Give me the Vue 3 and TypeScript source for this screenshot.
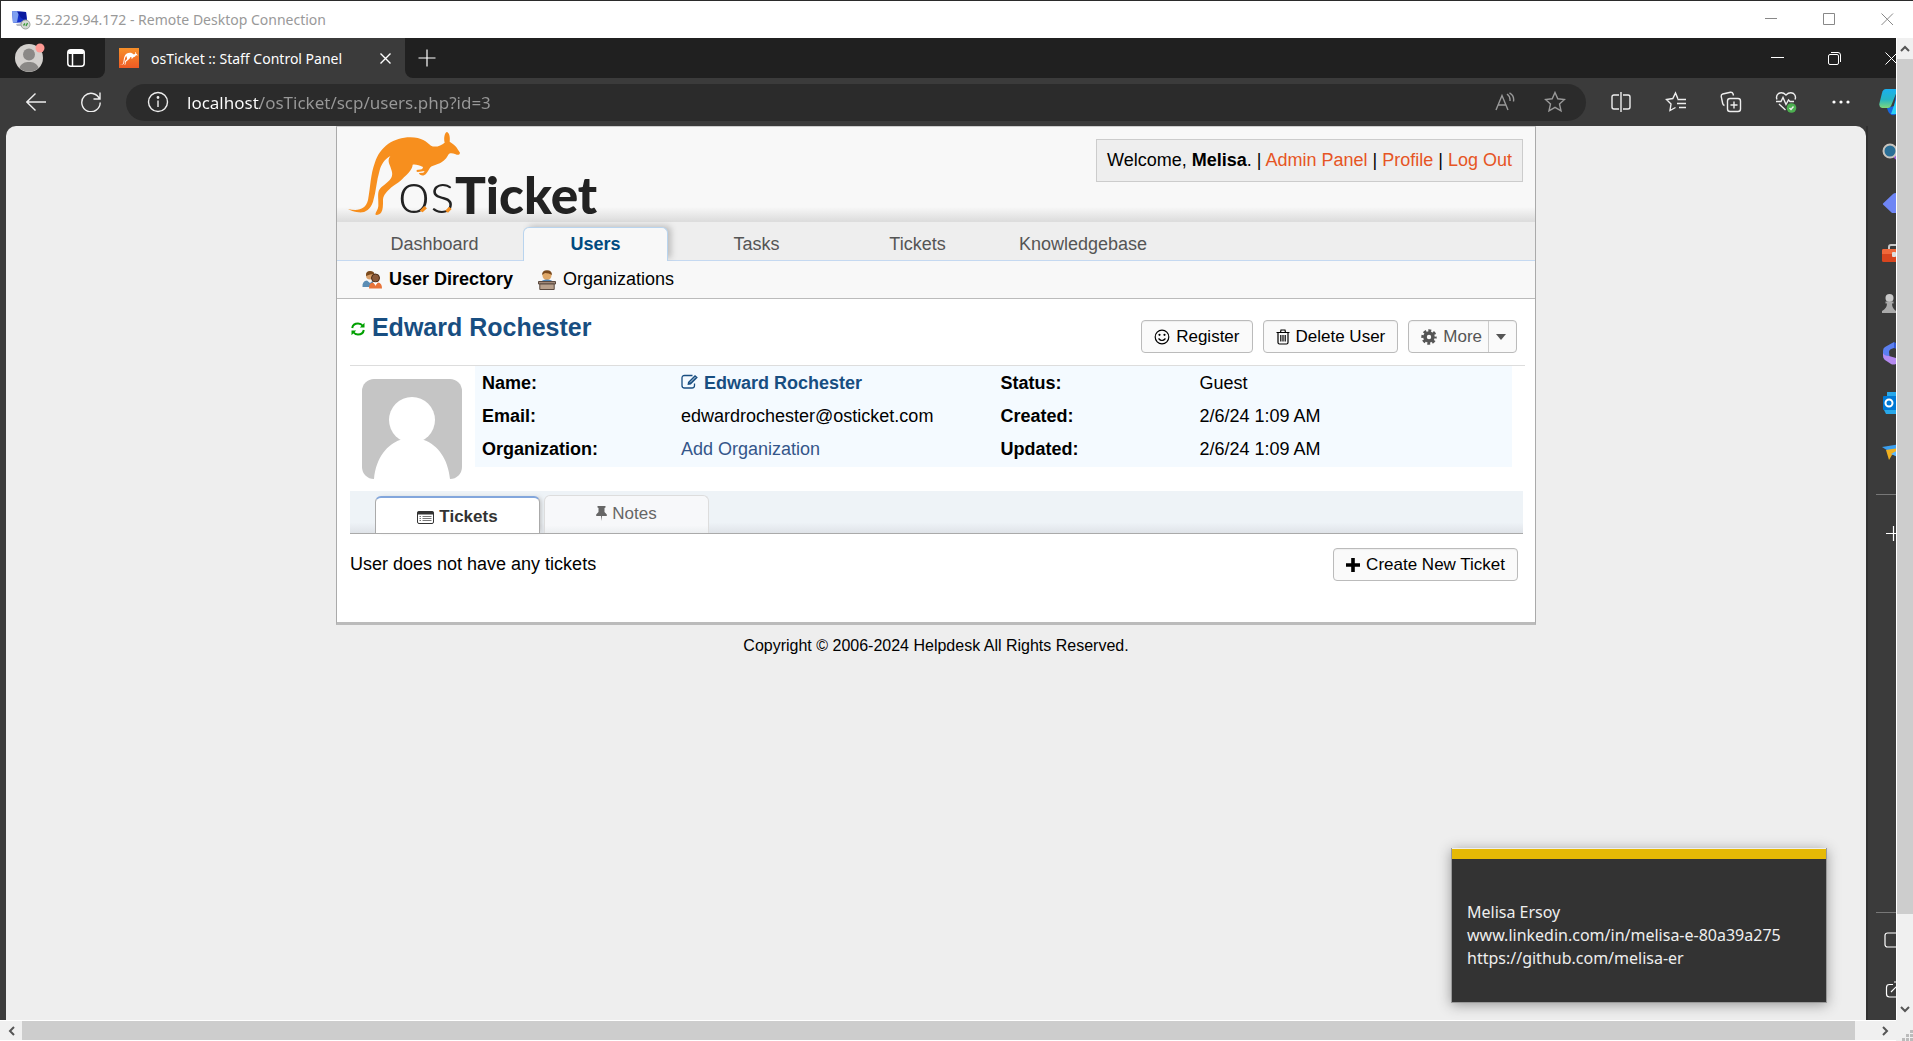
<script setup lang="ts">
import { ref } from 'vue'

interface Row {
  label: string
  value: string
  kind?: 'name' | 'link'
}

const navItems: string[] = ['Dashboard', 'Users', 'Tasks', 'Tickets', 'Knowledgebase']
const leftRows: Row[] = [
  { label: 'Name:', value: 'Edward Rochester', kind: 'name' },
  { label: 'Email:', value: 'edwardrochester@osticket.com' },
  { label: 'Organization:', value: 'Add Organization', kind: 'link' },
]
const rightRows: Row[] = [
  { label: 'Status:', value: 'Guest' },
  { label: 'Created:', value: '2/6/24 1:09 AM' },
  { label: 'Updated:', value: '2/6/24 1:09 AM' },
]
const address = ref<string>('localhost/osTicket/scp/users.php?id=3')
const activeNav = ref<string>('Users')
</script>

<template>
  <div class="desktop">
    <svg class="defs" aria-hidden="true">
      <symbol id="roo" viewBox="50 30 345 260">
        <path d="M53 267C85 274 106 268 113 240C121 200 120 165 134 127C150 80 190 52 240 52C275 52 288 66 302 77C315 84 332 77 343 68C339 52 344 37 350 36C357 38 360 52 358 65C366 71 378 78 382 88L389 98C388 105 382 106 376 103C366 99 358 98 354 104C346 120 335 127 322 132C312 137 303 138 299 143C294 152 288 163 281 166C275 169 265 163 266 159L279 158L283 153L262 156C256 154 258 149 264 149C273 149 277 148 278 141C268 137 256 132 247 134C245 150 235 158 221 172C206 190 190 195 178 207C164 220 158 228 158 243C158 256 158 268 153 277C148 285 136 287 135 283C137 274 143 269 144 258C145 240 141 222 146 211C153 197 171 192 182 175C190 161 183 150 179 137C174 125 173 118 180 108C163 117 153 133 148 151C138 183 138 214 128 245C119 270 104 279 84 277C70 275 60 271 53 267Z" />
      </symbol>
    </svg>

    <header class="rdp">
      <svg class="rdp-icon" viewBox="0 0 20 20" width="20" height="20" aria-hidden="true">
        <path d="M1 1L15 2L16 12L2 13Z" fill="#1330c8" />
        <path d="M1 1L8 1.500L6 12.500L2 13Z" fill="#7fa0f0" />
        <path d="M6 1.500L15 2L16 11L10 8Z" fill="#0a1aa0" />
        <path d="M5 14L12 13L12 16L6 16Z" fill="#b9bcc4" />
        <circle cx="14.500" cy="14.500" r="4.500" fill="#d4d8d4" stroke="#9aa09a" />
        <path d="M12.500 15.500L14 13.500M15 16L16.500 13" stroke="#3b9a3b" stroke-width="1.300" />
      </svg>
      <span class="rdp-name">52.229.94.172 - Remote Desktop Connection</span>
      <div class="rdp-controls">
        <button aria-label="Minimize window"><svg width="13" height="13" viewBox="0 0 13 13"><path d="M0 5.500H12" /></svg></button>
        <button aria-label="Maximize window"><svg width="13" height="13" viewBox="0 0 13 13"><path d="M.5.5H11.500V11.500H.5Z" /></svg></button>
        <button aria-label="Close window"><svg width="13" height="13" viewBox="0 0 13 13"><path d="M.5.5L12 12M12 .5L.5 12" /></svg></button>
      </div>
    </header>

    <div class="session">
      <div class="browser">
        <div class="tabstrip">
          <div class="strip-left">
            <button class="profile" aria-label="Account">
              <svg width="30" height="30" viewBox="0 0 30 30">
                <circle cx="14" cy="15" r="14" fill="#d3d0cd" />
                <circle cx="14" cy="11.500" r="6" fill="#8a8886" />
                <path d="M4.500 25C6 20 10 19 14 19S22 20 23.500 25A14 14 0 0 1 4.500 25Z" fill="#8a8886" />
                <circle cx="25" cy="5" r="4.500" fill="#ff9a94" />
              </svg>
            </button>
            <button class="workspaces" aria-label="Tab actions">
              <svg width="18" height="18" viewBox="0 0 18 18" fill="none" stroke="#fff" stroke-width="1.500"><rect x=".8" y=".8" width="16.400" height="16.400" rx="3" /><path d="M1 3.500H17M5.500 5V17" /><path d="M1.500 3H16.500" stroke-width="4" /></svg>
            </button>
          </div>
          <div class="tab">
            <span class="favicon"><svg width="18" height="15"><use href="#roo" fill="#fff" /></svg></span>
            <span class="tab-title">osTicket :: Staff Control Panel</span>
            <button aria-label="Close tab"><svg width="11" height="11" viewBox="0 0 11 11" stroke="#fff" stroke-width="1.400"><path d="M.5.5L10.500 10.500M10.500.5L.5 10.500" /></svg></button>
          </div>
          <button class="new-tab" aria-label="New tab"><svg width="18" height="18" viewBox="0 0 18 18" stroke="#fff" stroke-width="1.200"><path d="M9 .5V17.500M.5 9H17.500" /></svg></button>
          <div class="win-controls">
            <button aria-label="Minimize"><svg width="13" height="13" viewBox="0 0 13 13"><path d="M0 5.500H13" /></svg></button>
            <button aria-label="Restore"><svg width="13" height="13" viewBox="0 0 13 13"><rect x=".5" y="2.500" width="10" height="10" rx="1.500" /><path d="M3 .5H10Q12.500.5 12.500 3V10" /></svg></button>
            <button class="clipped" aria-label="Close"><svg width="13" height="13" viewBox="0 0 13 13"><path d="M.5.5L12.500 12.500M12.500.5L.5 12.500" /></svg></button>
          </div>
        </div>

        <div class="toolbar">
          <div class="history">
            <button aria-label="Back"><svg width="20" height="20" viewBox="0 0 20 20"><path d="M20 10H.8M9.500 1.500L.8 10L9.500 18.500" /></svg></button>
            <button aria-label="Refresh"><svg width="20" height="20" viewBox="0 0 20 20"><path d="M18.500 7A9.200 9.200 0 1 0 19.200 10.500M19 .5V7H12.500" /></svg></button>
          </div>
          <div class="omnibox">
            <button class="site-info" aria-label="Site information"><svg width="22" height="22" viewBox="0 0 22 22"><circle cx="11" cy="11" r="9.500" /><path d="M11 9.500V16" /><circle cx="11" cy="6.500" r=".7" /></svg></button>
            <input v-model="address" class="address" type="text" aria-label="Address" />
            <button class="dim" aria-label="Read aloud"><svg width="20" height="20" viewBox="0 0 20 20"><path d="M1 18L7 3.500L13 18M3 13H11M12 2Q15.500 4.500 15 9M14.500 .8Q19.500 3.500 18.500 9.500" /></svg></button>
            <button class="dim" aria-label="Add to favorites"><svg width="22" height="22" viewBox="0 0 22 22"><path d="M11 1.500L13.800 7.800L20.500 8.500L15.500 13L17 19.800L11 16.300L5 19.800L6.500 13L1.500 8.500L8.200 7.800Z" /></svg></button>
          </div>
          <div class="tools">
            <button aria-label="Split screen"><svg width="20" height="20" viewBox="0 0 20 20"><path d="M8 3H3Q1 3 1 5V15Q1 17 3 17H8M12 3H17Q19 3 19 5V15Q19 17 17 17H12M10 0V20" /></svg></button>
            <button aria-label="Favorites"><svg width="22" height="22" viewBox="0 0 22 22"><path d="M13 7.500H12.800L10.500 2L7.800 7.500L1.500 8.500L6 13L5 19.500L10.500 16.500M12.500 8.500H21M12 12.500H21M14 16.500H21" /></svg></button>
            <button aria-label="Collections"><svg width="22" height="22" viewBox="0 0 22 22"><rect x="7.500" y="7.500" width="13" height="13" rx="2.500" /><path d="M14 10.500V17.500M10.500 14H17.500M4.500 14.500Q3 14 2.700 12.500L1.200 5.500Q1 3.500 2.700 3L10.500 1.200Q12.500 1 13 2.800L13.500 4.500" /></svg></button>
            <button aria-label="Browser essentials"><svg width="22" height="22" viewBox="0 0 22 22"><path d="M2 8.500Q.5 5 3.500 2.500Q7.500.5 11 4Q14.500.5 18.500 2.500Q21.500 5 20 8.500M1 10.500H6L8 6.500L11 13.500L13.500 9L15 10.500H19M4 13L10.500 19" /><circle cx="16.500" cy="17" r="4.800" fill="#4caf50" stroke="none" /><path d="M14.500 17L16 18.500L18.500 15.500" /></svg></button>
            <button aria-label="Settings and more"><svg width="18" height="4" viewBox="0 0 18 4"><g fill="#fff" stroke="none"><circle cx="2" cy="2" r="1.600" /><circle cx="9" cy="2" r="1.600" /><circle cx="16" cy="2" r="1.600" /></g></svg></button>
            <button class="copilot" aria-label="Copilot">
              <svg width="30" height="28" viewBox="0 0 30 28">
                <defs><linearGradient id="cop" x1="0" y1="0" x2="0" y2="1"><stop offset="0" stop-color="#1ab0f0" /><stop offset=".55" stop-color="#25b5c5" /><stop offset="1" stop-color="#7fd879" /></linearGradient></defs>
                <path d="M8 20L15 18L18 1H25V20L16 27Q11 28 9 23Z" fill="#1668e0" stroke="none" />
                <path d="M7 1H19L12 18Q11 20 9 20H3Q-.5 19 .5 15L3 5Q4 1 7 1Z" fill="url(#cop)" stroke="none" />
                <path d="M18 9L12 26H22V9Z" fill="#2ad0f5" stroke="none" />
              </svg>
            </button>
          </div>
        </div>

        <div class="viewport">
          <main class="page">
            <div class="container">
              <div class="banner">
                <a href="#" class="logo" aria-label="osTicket">
                  <svg width="260" height="87" viewBox="50 30 780 261">
                    <use href="#roo" x="50" y="30" width="345" height="260" fill="#f78f1e" />
                    <text x="202" y="280" class="logo-os">os</text>
                    <text x="374" y="281" class="logo-ticket">Ticket</text>
                    <path d="M268 272L282 258L290 265L277 277ZM345 272L356 260L364 267L353 278Z" fill="#f78f1e" />
                  </svg>
                </a>
                <p class="welcome">
                  Welcome, <strong>Melisa</strong>. | <a href="#">Admin Panel</a> | <a href="#">Profile</a> | <a href="#">Log Out</a>
                </p>
              </div>

              <nav class="mainnav" aria-label="Main">
                <a v-for="item in navItems" :key="item" href="#" :class="{ active: item === activeNav }" @click.prevent="activeNav = item">{{ item }}</a>
              </nav>

              <nav class="subnav" aria-label="Users">
                <a href="#" class="current">
                  <svg width="20" height="20" viewBox="0 0 20 20">
                    <circle cx="8" cy="5.500" r="4" fill="#d9a06b" /><path d="M4 5Q4 1 8 1T12.500 4Q8 4 4 6Z" fill="#7a4a1e" />
                    <path d="M.5 17Q0 11 5 10.500L8 13L11 10.500V17Z" fill="#5b8db5" />
                    <circle cx="13.500" cy="8" r="4" fill="#8a5a3a" stroke="#4a2d18" />
                    <path d="M7 18.500Q7 12.500 11 12.500L13.500 15L16 12.500Q20 13 20 18.500Z" fill="#e8743a" /><path d="M12 12.500H15L13.500 16Z" fill="#fff" />
                  </svg>
                  User Directory
                </a>
                <a href="#">
                  <svg width="18" height="20" viewBox="0 0 18 20">
                    <circle cx="9" cy="5.500" r="4.500" fill="#e0a868" /><path d="M4 5Q4 .3 9 .3T14 5Q11 3 7 3Z" fill="#7a4a1e" />
                    <path d="M3 12Q4 9.500 9 9.500T15 12Z" fill="#4f86b8" />
                    <path d="M.5 11.500H17.500V14H.5Z" fill="#a08878" stroke="#5b4a40" /><path d="M1.800 14H16.200V19.500H1.800Z" fill="#b8a08c" stroke="#5b4a40" />
                  </svg>
                  Organizations
                </a>
              </nav>

              <section class="content">
                <div class="heading">
                  <h2>
                    <a href="#">
                      <svg width="14" height="14" viewBox="0 0 14 14" fill="none" stroke="#00a000" stroke-width="2"><path d="M1.200 6Q2 1.500 7 1.500Q10 1.500 12 4M12.800 8Q12 12.500 7 12.500Q4 12.500 2 10" /><path d="M13.500 .8V5.500H8.800ZM.5 13.200V8.500H5.200Z" fill="#00a000" stroke="none" /></svg>
                      Edward Rochester
                    </a>
                  </h2>
                  <div class="actions">
                    <button class="btn">
                      <svg width="16" height="16" viewBox="0 0 16 16" fill="none" stroke="#000" stroke-width="1.200"><circle cx="8" cy="8" r="6.800" /><path d="M4.500 9.500Q8 13.500 11.500 9.500" /><g fill="#000" stroke="none"><circle cx="5.500" cy="5.800" r="1.100" /><circle cx="10.500" cy="5.800" r="1.100" /></g></svg>
                      Register
                    </button>
                    <button class="btn">
                      <svg width="14" height="16" viewBox="0 0 14 16" fill="none" stroke="#000" stroke-width="1.200"><path d="M.5 3.500H13.500M4.500 3.500L5 1H9L9.500 3.500M2 4V13.500Q2 15 3.500 15H10.500Q12 15 12 13.500V4M4.800 6V12.500M7 6V12.500M9.200 6V12.500" /></svg>
                      Delete User
                    </button>
                    <div class="split">
                      <button>
                        <svg width="16" height="16" viewBox="0 0 16 16"><g fill="none" stroke="#555"><circle cx="8" cy="8" r="4" stroke-width="3.600" /><circle cx="8" cy="8" r="6.400" stroke-width="2.600" stroke-dasharray="2.900 2.127" stroke-dashoffset="1.450" /></g></svg>
                        More
                      </button>
                      <button class="caret" aria-label="More actions"><svg width="10" height="6" viewBox="0 0 10 6"><path d="M0 0H10L5 6Z" fill="#555" /></svg></button>
                    </div>
                  </div>
                </div>

                <div class="profile-row">
                  <svg class="avatar" width="100" height="100" viewBox="0 0 100 100" role="img" aria-label="Avatar"><rect width="100" height="100" fill="#c5c5c5" /><circle cx="50" cy="41" r="23" fill="#fff" /><path d="M12 100C14 78 26 65 38 61Q50 55 62 61C76 66 86 80 88 100Z" fill="#fff" /></svg>
                  <div class="facts">
                    <table v-for="(rows, i) in [leftRows, rightRows]" :key="i">
                      <tbody>
                        <tr v-for="row in rows" :key="row.label">
                          <th scope="row">{{ row.label }}</th>
                          <td>
                            <a v-if="row.kind === 'name'" href="#" class="name">
                              <svg width="18" height="15" viewBox="0 0 18 15" fill="none" stroke="#184e81" stroke-width="1.300"><path d="M11.500 1.500H3.500Q1 1.500 1 4V11.500Q1 14 3.500 14H11Q13.500 14 13.500 11.500V9.500" /><path d="M7 8L14 1L16.800 3.500L9.800 10.500L6.500 11Z" fill="#184e81" stroke="none" /><path d="M9 8.500L14.500 3" stroke="#f5faff" stroke-width=".8" /></svg>
                              {{ row.value }}
                            </a>
                            <a v-else-if="row.kind === 'link'" href="#">{{ row.value }}</a>
                            <template v-else>{{ row.value }}</template>
                          </td>
                        </tr>
                      </tbody>
                    </table>
                  </div>
                </div>

                <div class="tabs" role="tablist">
                  <button role="tab" aria-selected="true" class="on">
                    <svg width="17" height="13" viewBox="0 0 17 13"><rect x=".5" y=".5" width="16" height="12" rx="1.500" fill="#fff" stroke="#333" /><path d="M.5.5H16.500V3.500H.5Z" fill="#333" /><path d="M2.500 5.500H4M5.500 5.500H14.500M2.500 7.500H4M5.500 7.500H14.500M2.500 9.500H4M5.500 9.500H14.500" stroke="#777" /></svg>
                    Tickets
                  </button>
                  <button role="tab" aria-selected="false">
                    <svg width="11" height="15" viewBox="0 0 11 15" fill="#666"><path d="M1.500 0H9.500V1.500L8.500 2V6L10.800 8.500V10H6L5.500 15L5 10H.2V8.500L2.500 6V2L1.500 1.500Z" /></svg>
                    Notes
                  </button>
                </div>

                <div class="tickets">
                  <span>User does not have any tickets</span>
                  <button class="btn">
                    <svg width="14" height="14" viewBox="0 0 14 14"><path d="M5.200 0H8.800V5.200H14V8.800H8.800V14H5.200V8.800H0V5.200H5.200Z" /></svg>
                    Create New Ticket
                  </button>
                </div>
              </section>
            </div>
            <footer class="copyright">Copyright © 2006-2024 Helpdesk All Rights Reserved.</footer>
          </main>

          <aside class="sidebar">
            <button aria-label="Search"><svg width="22" height="22" viewBox="0 0 22 22"><path d="M12 13L20 21" stroke="#9b59d0" stroke-width="4" /><circle cx="8" cy="9" r="6.500" fill="#2a6f97" stroke="#c8c4be" stroke-width="2" /></svg></button>
            <button aria-label="Shopping"><svg width="22" height="22" viewBox="0 0 22 22"><path d="M1 11.500L11 2Q12 1 14 1H22V21H10L1.500 13Q.5 12 1 11.500Z" fill="#6f86f5" /></svg></button>
            <button aria-label="Tools"><svg width="26" height="18" viewBox="0 0 26 18"><path d="M7 5V3Q7 1 9 1H17" fill="none" stroke="#c8c8c8" stroke-width="2" /><rect y="5" width="26" height="13" rx="1.500" fill="#d8451e" /><path d="M0 6.500Q0 5 1.500 5H26V10H0Z" fill="#f0683a" /><rect x="10" y="8" width="4" height="5" rx="1" fill="#ddd" /></svg></button>
            <button aria-label="Games"><svg width="22" height="22" viewBox="0 0 22 22"><path d="M14 1H22V16H14Z" fill="#7d3fa8" /><circle cx="7.500" cy="6" r="4" fill="#c8c8c8" /><path d="M3.500 9.500H11.500V11.500H10Q10 16 14 19V21H0V19Q5 16 5 11.500H3.500Z" fill="#aaa" /></svg></button>
            <button aria-label="Microsoft 365"><svg width="24" height="24" viewBox="0 0 24 24"><path d="M12 1L3 6Q1 7 1 10V14Q1 17 3 19L8 20L7 11Q7 8 12 7Z" fill="#5b7ff0" /><path d="M1 12Q2 15 7 15L14 17V23Q11 24 9 23L3 19Q1 17 1 14Z" fill="#b58af0" /><path d="M12 1L20 5V10L12 7Z" fill="#3559d0" /></svg></button>
            <button aria-label="Outlook"><svg width="24" height="22" viewBox="0 0 24 22"><path d="M5 0H24V22H4L2 18H5Z" fill="#28a8ea" /><rect x="1" y="4" width="16" height="14" rx="1" fill="#0078d4" /><circle cx="7" cy="11" r="3.500" fill="none" stroke="#fff" stroke-width="2" /></svg></button>
            <button aria-label="Drop"><svg width="24" height="20" viewBox="0 0 24 20"><path d="M0 4L24 0V18L8 9Z" fill="#3a9ff0" /><path d="M4 7L7 17L10 12L24 4L10 6Z" fill="#f0b020" /><path d="M9 11L24 3V18Z" fill="#5bb8ff" /></svg></button>
            <hr class="after-apps" />
            <button class="line plus" aria-label="Customize"><svg width="15" height="15" viewBox="0 0 15 15"><path d="M7.500 0V15M0 7.500H15" /></svg></button>
            <hr class="before-end" />
            <button class="line" aria-label="Screenshot"><svg width="20" height="16" viewBox="0 0 20 16"><rect x="3" y="1" width="17" height="14" rx="2.500" /></svg></button>
            <button class="line last" aria-label="Open in new window"><svg width="22" height="18" viewBox="0 0 22 18"><path d="M11 3.500H7.500Q4.500 3.500 4.500 6.500V13Q4.500 16 7.500 16H20M9 11L19 1M12 1H20" /></svg></button>
          </aside>
        </div>
      </div>

      <div class="vscroll">
        <button aria-label="Scroll up"><svg width="10" height="7" viewBox="0 0 10 7"><path d="M1 6L5 2L9 6" /></svg></button>
        <div class="vtrack"><div class="vthumb"></div></div>
        <button aria-label="Scroll down"><svg width="10" height="7" viewBox="0 0 10 7"><path d="M1 1L5 5L9 1" /></svg></button>
      </div>
      <div class="hscroll">
        <button aria-label="Scroll left"><svg width="7" height="10" viewBox="0 0 7 10"><path d="M6 1L2 5L6 9" /></svg></button>
        <div class="htrack"><div class="hthumb"></div></div>
        <button aria-label="Scroll right"><svg width="7" height="10" viewBox="0 0 7 10"><path d="M1 1L5 5L1 9" /></svg></button>
      </div>
      <div class="grip"><svg width="11" height="11" viewBox="0 0 11 11" fill="#bbb"><path d="M8 0H11V3H8ZM4 4H7V7H4ZM8 4H11V7H8ZM0 8H3V11H0ZM4 8H7V11H4ZM8 8H11V11H8Z" /></svg></div>
    </div>

    <div class="note" role="status">
      <span>Melisa Ersoy</span>
      <span>www.linkedin.com/in/melisa-e-80a39a275</span>
      <span>https://github.com/melisa-er</span>
    </div>
  </div>
</template>

<style>
body {
  margin: 0;
  background: #eee;
}
</style>

<style scoped>
* {
  box-sizing: border-box;
}
.desktop {
  position: relative;
  display: flex;
  flex-direction: column;
  min-height: 100vh;
  border-top: 1px solid #2b2b2b;
  font-family: "Liberation Sans", Arial, sans-serif;
  font-size: 18px;
  color: #000;
}
.defs {
  position: absolute;
  width: 0;
  height: 0;
}
button {
  display: flex;
  align-items: center;
  justify-content: center;
  margin: 0;
  padding: 0;
  border: 0;
  background: none;
  font: inherit;
  color: inherit;
}
svg {
  flex: none;
}
a {
  text-decoration: none;
  color: inherit;
}

/* remote session title bar */
.rdp {
  display: flex;
  align-items: center;
  height: 37px;
  padding-left: 10px;
  background: #fff;
  border-left: 1px solid #2b2b2b;
  color: #999;
  font: 14px "Noto Sans", sans-serif;
}
.rdp-name {
  margin-left: 4px;
}
.rdp-controls {
  display: flex;
  gap: 6px;
  margin-left: auto;
}
.rdp-controls button {
  width: 52px;
  height: 36px;
}
.rdp-controls svg {
  fill: none;
  stroke: #888;
}

.session {
  flex: 1;
  display: grid;
  grid-template-columns: minmax(0, 1fr) 17px;
  grid-template-rows: 1fr 21px;
}
.browser {
  display: flex;
  flex-direction: column;
  min-width: 0;
  background: #3b3b3b;
  overflow: hidden;
}

/* tab strip */
.tabstrip {
  display: flex;
  height: 40px;
  background: #3b3b3b;
}
.strip-left {
  display: flex;
  align-items: center;
  width: 105px;
  padding-left: 15px;
  background: #202020;
  border-bottom-right-radius: 8px;
}
.workspaces {
  margin-left: 22px;
}
.tab {
  display: flex;
  align-items: center;
  width: 300px;
  padding: 0 14px;
  color: #fff;
  font: 14px "Noto Sans", sans-serif;
  background: #3b3b3b;
  border-radius: 8px 8px 0 0;
}
.favicon {
  display: flex;
  align-items: center;
  justify-content: center;
  width: 20px;
  height: 20px;
  background: linear-gradient(#f7902a, #ee5a24);
}
.tab-title {
  flex: 1;
  margin-left: 12px;
  white-space: nowrap;
}
.new-tab {
  width: 43px;
  background: #202020;
  border-bottom-left-radius: 8px;
}
.win-controls {
  flex: 1;
  display: flex;
  justify-content: flex-end;
  background: #202020;
}
.win-controls button {
  width: 57px;
}
.win-controls .clipped {
  width: 33px;
  padding-left: 22px;
  justify-content: flex-start;
  overflow: hidden;
}
.win-controls svg {
  fill: none;
  stroke: #fff;
}

/* toolbar */
.toolbar {
  display: flex;
  align-items: center;
  height: 48px;
}
.toolbar svg {
  fill: none;
  stroke: #eee;
  stroke-width: 1.4px;
}
.history {
  display: flex;
  padding-left: 8px;
  width: 126px;
}
.history button {
  width: 55px;
  height: 40px;
}
.omnibox {
  flex: 1;
  display: flex;
  align-items: center;
  height: 37px;
  padding: 0 6px 0 14px;
  background: #2b2b2b;
  border-radius: 19px;
}
.site-info {
  width: 36px;
}
.omnibox .dim {
  width: 50px;
}
.omnibox .dim svg {
  stroke: #999;
}
.address {
  flex: 1;
  padding: 0;
  margin-left: 11px;
  border: 0;
  outline: 0;
  font: 17px "Noto Sans", sans-serif;
  color: transparent;
  background: linear-gradient(90deg, #fff 73px, #999 73px);
  -webkit-background-clip: text;
  background-clip: text;
}
.tools {
  display: flex;
  width: 310px;
  padding-left: 7px;
}
.tools button {
  width: 55px;
  height: 40px;
}
.tools .copilot {
  width: 28px;
  padding-left: 11px;
  justify-content: flex-start;
  overflow: hidden;
}

/* viewport and sidebar */
.viewport {
  flex: 1;
  display: flex;
  padding-left: 6px;
}
.page {
  flex: 1;
  min-width: 0;
  background: #eee;
  border-radius: 10px 10px 0 0;
  overflow: hidden;
}
.sidebar {
  display: flex;
  flex-direction: column;
  width: 30px;
  padding-top: 2px;
  border-left: 2px solid #303030;
  overflow: hidden;
}
.sidebar button {
  height: 50px;
  padding-left: 14px;
  justify-content: flex-start;
  overflow: hidden;
}
.sidebar .line svg {
  fill: none;
  stroke: #fff;
  stroke-width: 1.2px;
}
.sidebar .plus {
  padding-left: 18px;
}
.sidebar hr {
  width: 20px;
  height: 1px;
  border: 0;
  background: #777;
}
.after-apps {
  margin: 16px 0 13px 8px;
}
.before-end {
  margin: auto 0 2px 8px;
}
.sidebar .last {
  margin-bottom: 5px;
}

/* osTicket page */
.container {
  width: 1200px;
  max-width: 100%;
  margin: 0 auto;
  border: 1px solid #aaa;
  border-top-color: #ccc;
  border-bottom: 3px solid #bbb;
  background: #fff;
}
.banner {
  display: flex;
  justify-content: space-between;
  align-items: flex-start;
  height: 94px;
  padding: 3px 12px 0 10px;
  background: linear-gradient(#f8f8f8 85%, #ddd);
}
.logo-os {
  font: 300 174px Lato, sans-serif;
  fill: #222;
}
.logo-ticket {
  font: 900 154px Lato, sans-serif;
  fill: #222;
}
.welcome {
  margin: 9px 0 0;
  padding: 10px;
  height: 43px;
  line-height: 21px;
  border: 1px solid #ccc;
  background: #eee;
  white-space: nowrap;
}
.welcome a {
  color: #e65524;
}
.mainnav {
  display: flex;
  align-items: flex-end;
  gap: 16px;
  height: 40px;
  padding-left: 25px;
  background: #eee;
  border-top: 1px solid #ddd;
  border-bottom: 1px solid #c5d9f1;
}
.mainnav a {
  min-width: 145px;
  height: 34px;
  margin-bottom: -1px;
  padding: 0 12px;
  line-height: 32px;
  text-align: center;
  color: #555;
  border: 1px solid transparent;
  border-bottom: 0;
  border-radius: 6px 6px 0 0;
}
.mainnav .active {
  color: #004a80;
  font-weight: bold;
  background: #f8f8f8;
  border-color: #b9d4ee;
  box-shadow: 4px -2px 6px -1px #bbb;
  clip-path: inset(-8px -10px 0 0);
}
.subnav {
  display: flex;
  align-items: center;
  gap: 25px;
  height: 38px;
  padding-left: 25px;
  background: #f8f8f8;
  border-bottom: 1px solid #bbb;
}
.subnav a {
  display: flex;
  align-items: center;
  gap: 7px;
}
.subnav .current {
  font-weight: bold;
}
.content {
  padding: 0 12px 41px 13px;
}
.heading {
  display: flex;
  justify-content: space-between;
  height: 67px;
  margin-right: -2px;
  padding-right: 8px;
  border-bottom: 1px solid #ddd;
}
h2 {
  margin: 14px 0 0 1px;
  font-size: 25px;
  line-height: 28px;
  color: #184e81;
}
.actions {
  display: flex;
  gap: 10px;
  padding-top: 21px;
  font-size: 17px;
}
.btn,
.split {
  height: 33px;
  border: 1px solid #bbb;
  border-radius: 4px;
  background: #fafafa;
  box-shadow: inset 0 1px 1px #eee;
  font-size: 17px;
}
.btn {
  gap: 6px;
  padding: 0 12px;
}
.split {
  display: flex;
  color: #555;
}
.split button {
  gap: 6px;
  padding: 0 6px 0 12px;
}
.split .caret {
  width: 28px;
  padding: 0 4px 0 0;
  border-left: 1px solid #ccc;
}
.profile-row {
  display: flex;
  align-items: flex-start;
  height: 125px;
  padding: 0 11px 0 12px;
}
.avatar {
  margin-top: 13px;
  border-radius: 12px;
}
.facts {
  flex: 1;
  display: flex;
  margin-left: 13px;
  padding: 1px 0;
  background: #f4faff;
}
table {
  flex: 1 1 0;
  border-collapse: collapse;
  table-layout: fixed;
}
tr {
  height: 33px;
}
th,
td {
  padding: 0 7px;
  text-align: left;
  white-space: nowrap;
}
th {
  width: 199px;
}
td a {
  color: #34568a;
}
td .name {
  color: #184e81;
  font-weight: bold;
}
.tabs {
  display: flex;
  align-items: flex-end;
  gap: 4px;
  height: 43px;
  padding-left: 25px;
  border-bottom: 1px solid #aaa;
  background: linear-gradient(#eef3f7 75%, #dfe3e8);
}
.tabs button {
  gap: 5px;
  width: 165px;
  height: 38px;
  padding-bottom: 2px;
  border: 1px solid #ddd;
  border-bottom: 0;
  border-radius: 6px 6px 0 0;
  background: linear-gradient(#f7f8fa 80%, #eceef0);
  color: #666;
  font-size: 17px;
}
.tabs .on {
  height: 37px;
  padding: 3px 0 0;
  border-color: #aaa;
  border-top: 2px solid #82a6dc;
  background: #fff;
  color: #333;
  font-weight: bold;
  box-shadow: 3px 0 5px -2px #bbb;
}
.tickets {
  display: flex;
  align-items: center;
  justify-content: space-between;
  padding: 14px 5px 0 0;
}
.copyright {
  margin-top: 11px;
  text-align: center;
  font-size: 16px;
  line-height: 20px;
}

/* session scroll bars */
.vscroll {
  display: flex;
  flex-direction: column;
  border-left: 1px solid #fff;
  background: #f0f0f0;
}
.vscroll button {
  height: 21px;
}
.vtrack,
.htrack {
  flex: 1;
}
.vthumb {
  height: 91%;
  background: #cdcdcd;
}
.hscroll {
  display: flex;
  border-top: 1px solid #fff;
  border-bottom: 1px solid #fff;
  background: #f0f0f0;
}
.hscroll button {
  width: 22px;
}
.hthumb {
  width: 99%;
  height: 100%;
  background: #cdcdcd;
}
.vscroll svg,
.hscroll svg {
  fill: none;
  stroke: #555;
  stroke-width: 2px;
}
.grip {
  display: flex;
  align-items: flex-end;
  justify-content: flex-end;
  background: #f0f0f0;
}

/* desktop notification */
.note {
  position: absolute;
  right: 86px;
  bottom: 38px;
  display: flex;
  flex-direction: column;
  width: 376px;
  height: 155px;
  padding: 53px 15px 0;
  border: 1px solid #999;
  border-top: 0;
  background: #333;
  box-shadow: 0 2px 12px #999, inset 0 1px 0 #eee, inset 0 11px 0 #e6b905;
  color: #eee;
  font: 16px "Noto Sans", sans-serif;
  line-height: 23px;
}
</style>
